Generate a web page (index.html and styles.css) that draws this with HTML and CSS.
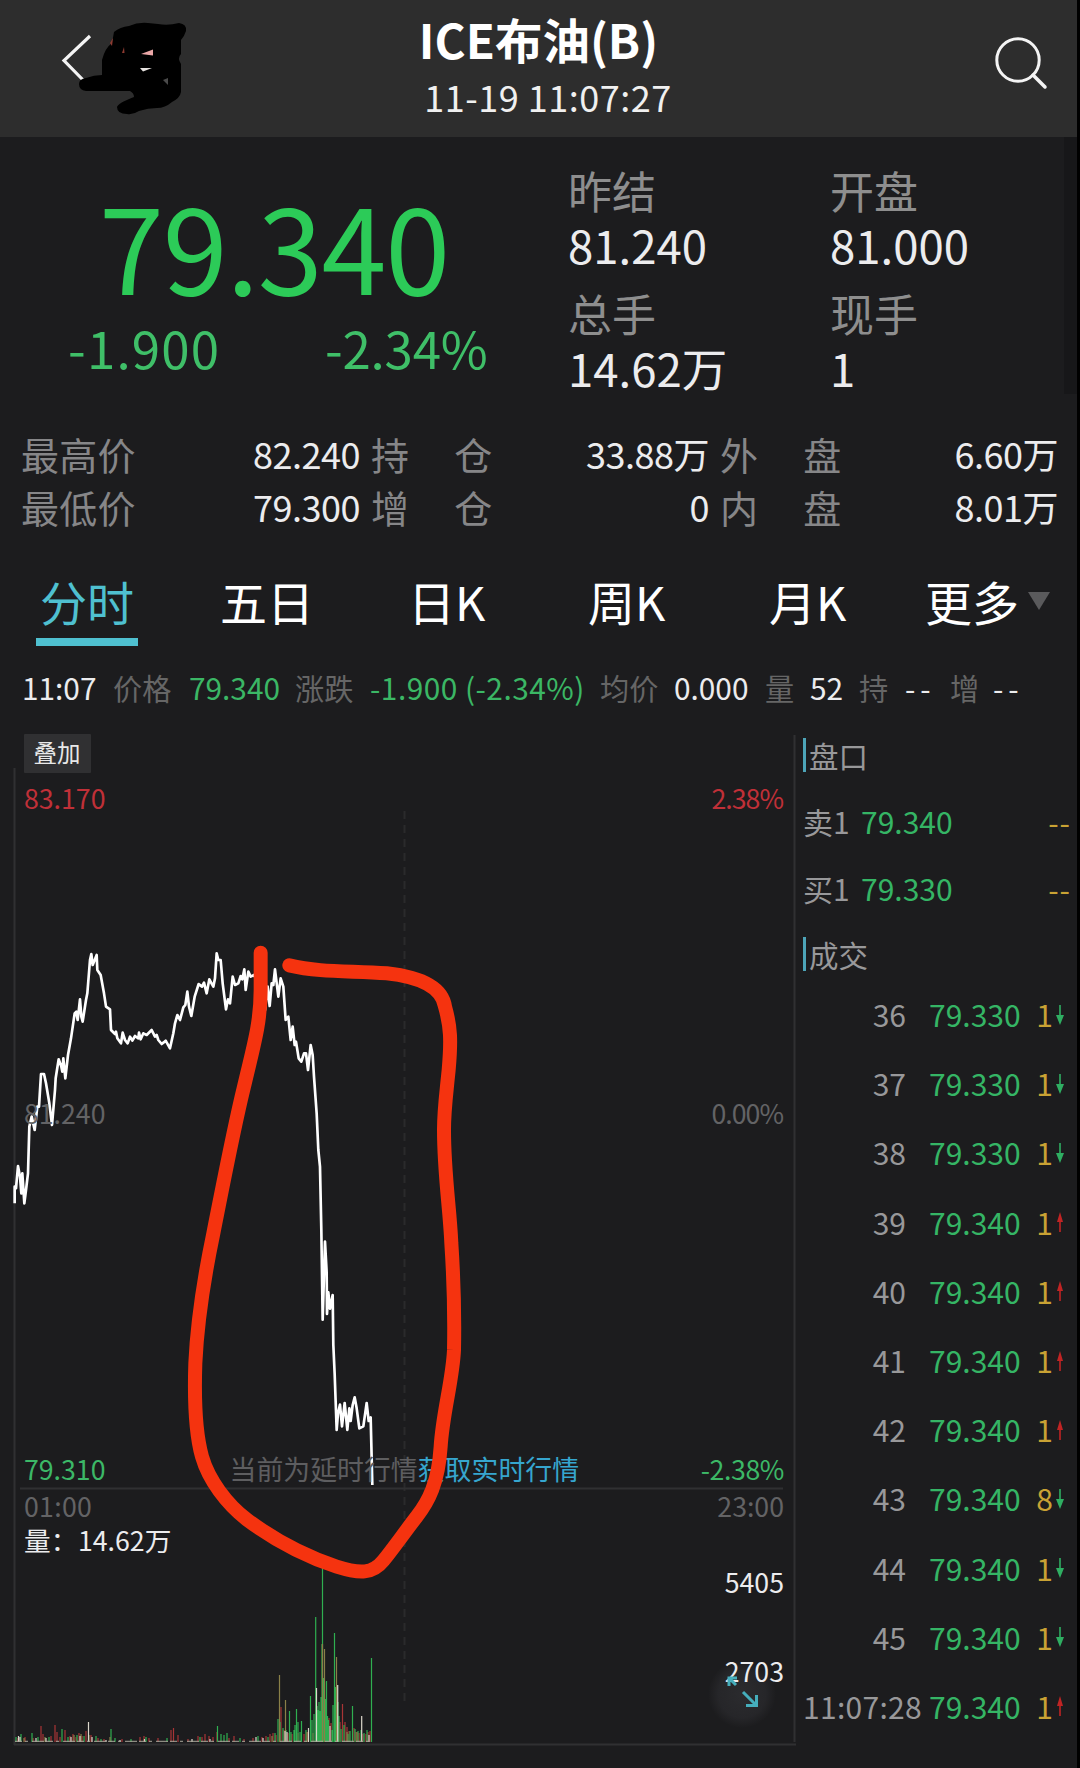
FILE: index.html
```html
<!DOCTYPE html>
<html lang="zh-CN">
<head>
<meta charset="utf-8">
<title>ICE布油(B)</title>
<link rel="stylesheet" href="styles.css">
</head>
<body>
<div class="screen">
  <header class="header">
    <svg class="back" viewBox="0 0 200 137" width="200" height="137">
      <path d="M90 36 64 60.500 86 83" fill="none" stroke="#f4f4f4" stroke-width="3.200"/>
      <path d="M114 32Q120 27 129 26Q138 22 148 23L158 24Q168 26 179 23Q187 24 186 31Q184 37 181 40V54Q177 58 181 64V92Q180 98 172 102Q165 108 157 108Q148 108 139 111Q133 115 127 114Q117 114 117 107Q118 103 134 97Q134 93 130 91H86Q79 90 79 84Q79 79 86 78Q94 75 102 75V60Q105 48 112 43Z" fill="#000"/>
      <path d="M141 54 153 49.500V55.500Z" fill="#eba7a7"/>
      <path d="M140 68H152L143 71.500Z" fill="#e6e2df"/>
      <path d="M122 53 124 47 124.500 53ZM110 43 113 38 112 46Z" fill="#8d3a30"/>
      <path d="M163 80 168 78V85Z" fill="#4a4a4a"/>
    </svg>
    <div class="heading">
      <h1 class="title">ICE布油(B)</h1>
      <div class="clock">11-19 11:07:27</div>
    </div>
    <svg class="search" viewBox="0 0 60 60" width="60" height="60" fill="none" stroke="#f4f4f4" stroke-width="3">
      <circle cx="27" cy="27" r="21.200"/>
      <path d="M42 42 54 54" stroke-width="3.500" stroke-linecap="round"/>
    </svg>
  </header>

  <section class="quote">
    <div class="last">
      <div class="price">79.340</div>
      <div class="change"><span class="diff">-1.900</span><span class="pct">-2.34%</span></div>
    </div>
    <dl class="stats">
      <div><dt>昨结</dt><dd>81.240</dd></div>
      <div><dt>开盘</dt><dd>81.000</dd></div>
      <div><dt>总手</dt><dd>14.62万</dd></div>
      <div><dt>现手</dt><dd>1</dd></div>
    </dl>
    <div class="shade"></div>
  </section>

  <section class="details">
    <div class="row"><span class="k">最高价</span><span class="v">82.240</span></div>
    <div class="row"><span class="k wide"><i>持</i><i>仓</i></span><span class="v">33.88万</span></div>
    <div class="row"><span class="k wide"><i>外</i><i>盘</i></span><span class="v">6.60万</span></div>
    <div class="row"><span class="k">最低价</span><span class="v">79.300</span></div>
    <div class="row"><span class="k wide"><i>增</i><i>仓</i></span><span class="v">0</span></div>
    <div class="row"><span class="k wide"><i>内</i><i>盘</i></span><span class="v">8.01万</span></div>
  </section>

  <nav class="tabs">
    <span class="tab active">分时</span>
    <span class="tab">五日</span>
    <span class="tab">日K</span>
    <span class="tab">周K</span>
    <span class="tab">月K</span>
    <span class="tab more">更多<svg viewBox="0 0 24 18" width="24" height="18"><path d="M1 0H23L12 18Z" fill="#5a5a5c"/></svg></span>
  </nav>

  <div class="info">
    <span>11:07</span><span class="dim">价格</span><span class="down">79.340</span><span class="dim">涨跌</span><span class="down spread">-1.900 (-2.34%)</span><span class="dim">均价</span><span>0.000</span><span class="dim">量</span><span>52</span><span class="dim">持</span><span class="dash">--</span><span class="dim">增</span><span class="dash">--</span>
  </div>

  <main class="board">
    <svg class="chart" viewBox="0 729 796 1039" width="796" height="1039">
      <defs>
        <radialGradient id="halo">
          <stop offset="0" stop-color="#2b2b2e"/>
          <stop offset=".7" stop-color="#262629"/>
          <stop offset="1" stop-color="#1c1c1e"/>
        </radialGradient>
      </defs>
      <g class="axis">
        <path d="M14.500 768V1745M20 1488.500H783M14 1744.500H796M794.500 735V1742"/>
        <path d="M404.500 811V1706" stroke-dasharray="8 6" opacity=".7"/>
      </g>
      <rect x="24" y="734" width="67" height="39" rx="1" fill="#303032"/>
      <text x="33.500" y="762" class="tag">叠加</text>
      <circle cx="742" cy="1694" r="34" fill="url(#halo)"/>

      <g class="price-line" transform="translate(0 730) scale(.33333)">
        <path d="M44 1420V1370L48 1375 54 1308 60 1340 64 1390 67 1330 73 1420 78 1380 84 1330 88 1190 95 1160 104 1200 112 1130 117 1130 123 1032H132L138 1060 148 1120 156 1185 165 1080 167 1045 176 988 184 1010 187 1025 190 985 196 1045 204 975 213 925 224 850 229 845 233 870 240 808 244 860 248 875 258 810 262 790 270 690 274 672 278 705 284 690 290 675 292 720 302 735 312 790 318 830 330 838 333 900 345 912 348 905 352 925 363 940 368 908 375 930 383 940 390 920 397 932 405 918 415 925 417 908 422 928 430 910 440 915 455 900 465 920 470 915 475 930 485 942 490 938 497 932 510 955 520 910 525 880 532 855 540 870 550 832 556 825 562 785 567 830 574 858 584 800 596 762 606 770 612 758 620 790 628 748 640 770 645 745 650 670 655 690 662 690 668 760 678 838 684 808 690 820 698 740 705 765 715 760 722 738 727 748 733 718 737 780 745 725 752 740 762 735 775 760 790 850 795 840 803 770 809 828 815 760 820 765 825 718 835 800 842 745 850 770 857 870 865 860 872 930 878 890 884 945 888 935 896 985 904 995 912 970 918 970 924 1020 932 945 938 975 942 1040 950 1150 955 1260 960 1310 964 1500 968 1769 975 1535 980 1627 981 1752 985 1687 990 1736 998 1695 1000 1845 1004 1932 1010 2100 1014 2050 1020 2024 1026 2089 1034 2019 1042 2100 1048 2035 1052 2073 1058 2025 1064 2002 1070 2035 1078 2095 1090 2089 1100 2019 1106 2073 1112 2062 1117 2265"/>
      </g>

      <g class="labels">
        <text x="24" y="809" class="up">83.170</text>
        <text x="783" y="809" class="up end tight">2.38%</text>
        <text x="24" y="1124" class="mute">81.240</text>
        <text x="783" y="1124" class="mute end tight">0.00%</text>
        <text x="24" y="1480" class="fall">79.310</text>
        <text x="784" y="1480" class="fall end snug">-2.38%</text>
        <text x="24" y="1517" class="mute wider">01:00</text>
        <text x="784" y="1517" class="mute end">23:00</text>
        <text x="229.500" y="1480" class="notice">当前为延时行情<tspan class="link">获取实时行情</tspan></text>
        <text x="24" y="1551" class="lit">量：</text>
        <text x="78" y="1551" class="lit">14.62万</text>
        <text x="784" y="1593" class="lit end">5405</text>
        <text x="784" y="1682" class="lit end">2703</text>
      </g>

      <g class="volume" transform="matrix(1 0 0 -1 0 1742)">
        <path class="vr" d="M18 0v4M25 0v5M33 0v4M41 0v16M43 0v8M51 0v6M55 0v17M57 0v10M60 0v5M65 0v12M70 0v6M73 0v8M76 0v5M79 0v9M82 0v6M86 0v11M91 0v7M98 0v4M104 0v3M122 0v3M140 0v5M144 0v6M149 0v4M158 0v4M171 0v12M173.500 0v14M178 0v7M188 0v3M198 0v6M202 0v5M205 0v8M209 0v6M213 0v5M217 0v10M229 0v4M234 0v6M244 0v3M253 0v4M262 0v5M266 0v6M270 0v8M273 0v9M276 0v7M281 0v35M284 0v12M288 0v9M292 0v8M298 0v9M304 0v8M308 0v10M313 0v9M329 0v24M331 0v19M340 0v20M342.500 0v38M345 0v20M347 0v15M349 0v11M354 0v14M356 0v10M359 0v9M363 0v8M366 0v8M368 0v10M370 0v11"/>
        <path class="vg" d="M16 0v5M21 0v8M32 0v9M38 0v5M49 0v5M62 0v13M68 0v5M77 0v7M84 0v6M96 0v6M101 0v3M111 0v13M115 0v4M131 0v3M146 0v5M167 0v4M200 0v5M217.500 0v16M221 0v8M224 0v7M227 0v9M240 0v4M258 0v6M268 0v5M275 0v9M278 0v23M280 0v20M283 0v14M286 0v12M289.500 0v31M291 0v10M294 0v12M295 0v17M296.500 0v33M298 0v20M300 0v10M301.500 0v21M306 0v12M310.500 0v46M312 0v22M314 0v28M315.700 0v125M317 0v36M318 0v32M319 0v40M320 0v31M321 0v45M322 0v98M322.500 0v177M323.500 0v64M324.500 0v60M325.500 0v43M326.500 0v61M327.500 0v26M328.500 0v22M332 0v12M333 0v37M334.500 0v109M335.500 0v55M336.500 0v54M338 0v40M339 0v26M341 0v13M344 0v17M348 0v8M350 0v11M352.500 0v36M355 0v13M358 0v11M361 0v12M364 0v9M367 0v12M371.500 0v84"/>
        <path class="vo" d="M24 0v4M45 0v5M74 0v7M81 0v8M89 0v7M110 0v5M279.500 0v67M285.500 0v42M322.500 0v98M324.500 0v93M336.500 0v85M307 0v10M272 0v6M347 0v10M357 0v10"/>
        <path class="vw" d="M18.500 0v6M20 0v5M36 0v4M46 0v4M71 0v5M80 0v6M88.500 0v20M92 0v5M106 0v2M120 0v2M144.500 0v3M192 0v3M210 0v3M256 0v5M263 0v4M285 0v11M287 0v10M308.500 0v14M316.500 0v54M330 0v16M337.700 0v57M361.700 0v26M369 0v7"/>
        <path d="M15 .7H372" stroke="#aaa89c" stroke-width="1" stroke-dasharray="7 3 3 4 12 2"/>
      </g>

      <path class="expand" d="M729 1686V1678H737M729.500 1678.500 736 1685M743 1692 755.500 1704.500M746 1705.500H756.500V1695"/>

      <path class="marker" transform="translate(0 730) scale(.33333)" d="M868 706C960 728 1050 722 1160 730C1250 740 1325 765 1335 830C1352 890 1354 930 1346 1020C1338 1100 1332 1140 1332 1200C1332 1330 1350 1440 1354 1540C1362 1660 1364 1760 1362 1860C1358 1950 1328 2050 1322 2150C1315 2260 1285 2315 1250 2360C1210 2412 1180 2455 1150 2492C1118 2532 1080 2532 1010 2510C920 2480 820 2428 740 2368C680 2322 626 2250 606 2180C585 2105 583 1990 586 1900C592 1770 615 1630 640 1510C668 1370 700 1200 732 1070C760 950 782 880 782 780V668"/>
    </svg>

    <aside class="side">
      <h2 class="side-title">盘口</h2>
      <div class="level"><span>卖1</span><b>79.340</b><em>--</em></div>
      <div class="level"><span>买1</span><b>79.330</b><em>--</em></div>
      <h2 class="side-title deals">成交</h2>
      <div class="trade"><span>36</span><b>79.330</b><em>1</em><svg class="dn" viewBox="0 0 8 20"><path d="M3.200 0H4.800V10H8L4 20 0 10H3.200Z"/></svg></div>
      <div class="trade"><span>37</span><b>79.330</b><em>1</em><svg class="dn" viewBox="0 0 8 20"><path d="M3.200 0H4.800V10H8L4 20 0 10H3.200Z"/></svg></div>
      <div class="trade"><span>38</span><b>79.330</b><em>1</em><svg class="dn" viewBox="0 0 8 20"><path d="M3.200 0H4.800V10H8L4 20 0 10H3.200Z"/></svg></div>
      <div class="trade"><span>39</span><b>79.340</b><em>1</em><svg class="upw" viewBox="0 0 8 20"><path d="M3.200 20H4.800V10H7L4 0 1 10H3.200Z"/></svg></div>
      <div class="trade"><span>40</span><b>79.340</b><em>1</em><svg class="upw" viewBox="0 0 8 20"><path d="M3.200 20H4.800V10H7L4 0 1 10H3.200Z"/></svg></div>
      <div class="trade"><span>41</span><b>79.340</b><em>1</em><svg class="upw" viewBox="0 0 8 20"><path d="M3.200 20H4.800V10H7L4 0 1 10H3.200Z"/></svg></div>
      <div class="trade"><span>42</span><b>79.340</b><em>1</em><svg class="upw" viewBox="0 0 8 20"><path d="M3.200 20H4.800V10H7L4 0 1 10H3.200Z"/></svg></div>
      <div class="trade"><span>43</span><b>79.340</b><em>8</em><svg class="dn" viewBox="0 0 8 20"><path d="M3.200 0H4.800V10H8L4 20 0 10H3.200Z"/></svg></div>
      <div class="trade"><span>44</span><b>79.340</b><em>1</em><svg class="dn" viewBox="0 0 8 20"><path d="M3.200 0H4.800V10H8L4 20 0 10H3.200Z"/></svg></div>
      <div class="trade"><span>45</span><b>79.340</b><em>1</em><svg class="dn" viewBox="0 0 8 20"><path d="M3.200 0H4.800V10H8L4 20 0 10H3.200Z"/></svg></div>
      <div class="trade full"><span>11:07:28</span><b>79.340</b><em>1</em><svg class="upw" viewBox="0 0 8 20"><path d="M3.200 20H4.800V10H7L4 0 1 10H3.200Z"/></svg></div>
    </aside>
  </main>
</div>
</body>
</html>
```

FILE: styles.css
```css
* {
  box-sizing: border-box;
  margin: 0;
  padding: 0;
}

body {
  background: #000;
  font-family: "Noto Sans CJK SC", sans-serif;
  font-weight: 400;
}

b, i, em {
  font-weight: 400;
  font-style: normal;
}

svg {
  display: block;
}

.screen {
  width: 1077px;
  height: 1768px;
  overflow: hidden;
  background: #1c1c1e;
  color: #ececee;
}

.header {
  display: grid;
  grid-template-columns: 200px 1fr 200px;
  height: 137px;
  background: #2d2d2d;
}

.heading {
  padding-top: 12px;
  text-align: center;
  color: #fff;
}

.title {
  font-size: 47.5px;
  line-height: 54px;
  font-weight: 700;
}

.clock {
  margin-top: 8px;
  padding-left: 19px;
  font-size: 36px;
  line-height: 44px;
  letter-spacing: 0.5px;
  color: #f0f0f0;
}

.search {
  margin: 33px 0 0 114px;
}

.quote {
  display: grid;
  grid-template-columns: 568px 1fr 13px;
  height: 290px;
}

.last {
  padding-top: 47px;
}

.price {
  padding-left: 99px;
  font-size: 117px;
  line-height: 120px;
  letter-spacing: -1.2px;
  color: #2ccb58;
}

.change {
  display: grid;
  grid-template-columns: 257px 1fr;
  margin-top: 13px;
  padding-left: 68px;
  font-size: 51px;
  line-height: 60px;
  color: #3fbf68;
}

.diff {
  letter-spacing: 1.2px;
}

.pct {
  letter-spacing: -0.2px;
}

.stats {
  display: grid;
  grid-template-columns: 262px 1fr;
  grid-auto-rows: 102px;
  row-gap: 21px;
  padding-top: 29px;
}

.stats dt {
  font-size: 44px;
  line-height: 48px;
  color: #8e8e8e;
}

.stats dd {
  margin-top: 6px;
  font-size: 45.5px;
  line-height: 48px;
}

.shade {
  height: 257px;
  background: #171719;
}

.details {
  display: grid;
  grid-template-columns: 339px 338px 338px;
  column-gap: 11px;
  padding: 0 19px 0 21px;
  font-size: 36px;
  line-height: 53px;
  letter-spacing: -0.5px;
}

.row {
  display: flex;
  justify-content: space-between;
}

.k {
  font-size: 38px;
  letter-spacing: 0.3px;
  color: #868688;
}

.wide {
  display: flex;
  gap: 45px;
}

.tabs {
  display: grid;
  grid-template-columns: 180px 188px 180px 181px 156px 1fr;
  height: 107px;
  padding: 38px 0 0 40px;
  font-size: 47px;
  line-height: 60px;
  color: #fff;
}

.active {
  width: 102px;
  height: 75px;
  margin-left: -4px;
  padding-left: 4px;
  border-bottom: 8px solid #4fc0d0;
  color: #4fc0d0;
}

.more {
  display: flex;
  align-items: center;
  height: 60px;
  gap: 8px;
}

.info {
  display: grid;
  grid-template-columns: 91px 76px 106px 75px 230px 74px 91px 45px 49px 46px 45px 43px 1fr;
  height: 89px;
  padding: 27px 0 0 22px;
  font-size: 29.8px;
  line-height: 40px;
  white-space: nowrap;
}

.dim {
  font-size: 29.2px;
  color: #666;
}

.spread {
  letter-spacing: 0.5px;
}

.dash {
  letter-spacing: 5px;
}

.down {
  color: #3bb765;
}

.board {
  display: grid;
  grid-template-columns: 796px 1fr;
}

.axis {
  fill: none;
  stroke: #303032;
  stroke-width: 2;
}

.tag {
  font-size: 23.5px;
  fill: #e8e8e8;
}

.price-line {
  fill: none;
  stroke: #fff;
  stroke-width: 8;
  stroke-linejoin: round;
}

.labels {
  font-size: 26.7px;
}

.up {
  fill: #c03038;
}

.fall {
  fill: #3cb867;
}

.mute {
  fill: #636365;
}

.lit {
  fill: #ececee;
}

.end {
  text-anchor: end;
}

.tight {
  letter-spacing: -1px;
}

.snug {
  letter-spacing: -0.4px;
}

.wider {
  letter-spacing: 0.3px;
}

.notice {
  fill: #5e5e60;
  font-size: 26.9px;
}

.link {
  fill: #36a6cf;
}

.volume {
  fill: none;
  stroke-width: 1.2;
}

.vr {
  stroke: #a83436;
}

.vg {
  stroke: #2faf50;
}

.vo {
  stroke: #8a8048;
}

.vw {
  stroke: #dcd8cc;
}

.expand {
  fill: none;
  stroke: #45aebc;
  stroke-width: 3;
}

.marker {
  fill: none;
  stroke: #f5330f;
  stroke-width: 42;
  stroke-linecap: round;
  stroke-linejoin: round;
}

.side {
  padding: 9px 0 0 7px;
  font-size: 30px;
  line-height: 34px;
  color: #98989a;
}

.side-title {
  width: 200px;
  margin-bottom: 16px;
  padding-left: 3px;
  border-left: 3px solid #4da4b8;
  font-size: 29.5px;
  line-height: 34px;
  font-weight: 400;
}

.side-title.deals {
  margin: 15px 0 9px;
}

.level {
  display: grid;
  grid-template-columns: 58px 1fr auto;
  height: 67px;
  padding-right: 6px;
  line-height: 67px;
}

.side b {
  color: #35b565;
}

.side em {
  color: #c9a234;
}

.level em {
  letter-spacing: 1px;
}

.trade {
  display: grid;
  grid-template-columns: 103px 23px 106px 21px 8px;
  align-items: center;
  height: 69.2px;
  line-height: 69.2px;
  white-space: nowrap;
}

.trade span {
  text-align: right;
}

.trade b {
  grid-column: 3;
}

.trade em {
  text-align: right;
  padding-right: 3px;
}

.trade.full span {
  grid-column: 1 / 3;
  text-align: left;
  letter-spacing: 0.3px;
}

.trade svg {
  width: 8px;
  height: 20px;
}

.dn {
  fill: #2fae62;
}

.upw {
  fill: #c02424;
}
```
